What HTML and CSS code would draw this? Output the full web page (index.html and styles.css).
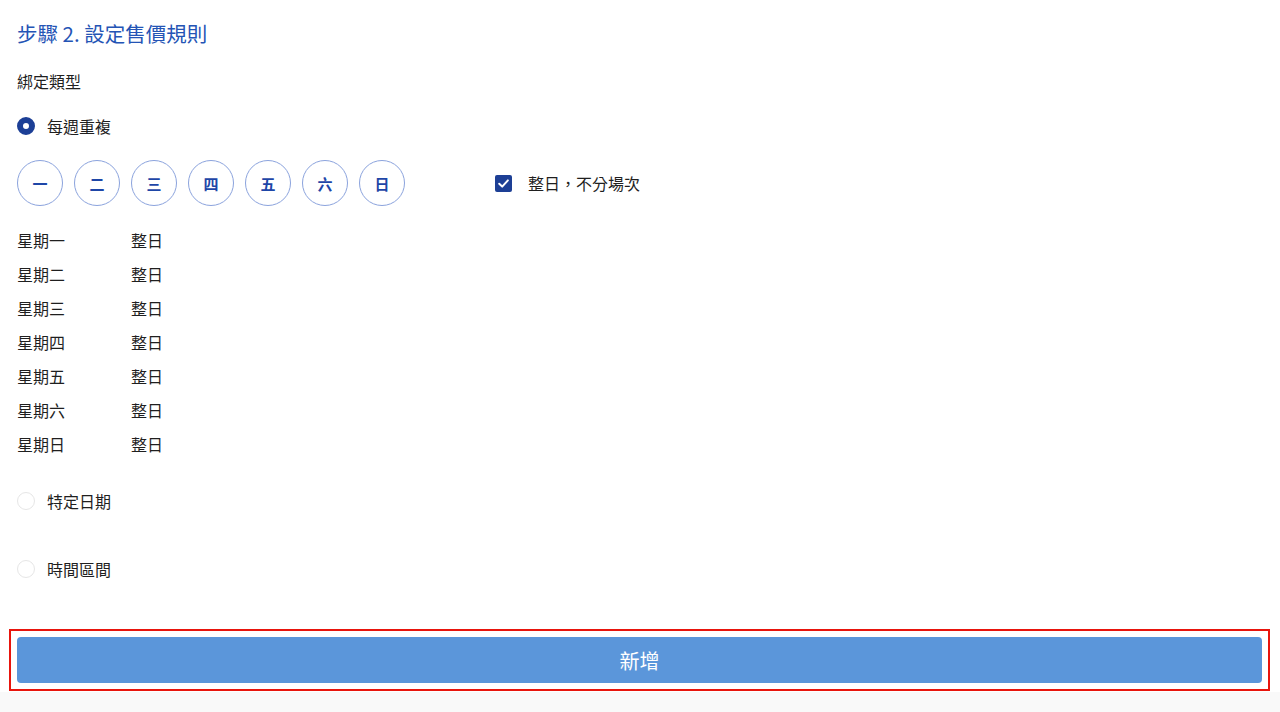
FILE: index.html
```html
<!DOCTYPE html>
<html lang="zh-Hant">

<head>
    <meta charset="UTF-8">
    <meta name="viewport" content="width=device-width, initial-scale=1.0">
    <title>設定售價規則</title>
    <link rel="stylesheet" href="styles.css">
</head>

<body>

    <div class="page">
        <h2 class="step-title">步驟 2. 設定售價規則</h2>

        <div class="field-label">綁定類型</div>

        <label class="radio-row first">
            <span class="radio checked"></span>
            <span>每週重複</span>
        </label>

        <div class="week-row">
            <div class="days">
                <button class="day">一</button>
                <button class="day">二</button>
                <button class="day">三</button>
                <button class="day">四</button>
                <button class="day">五</button>
                <button class="day">六</button>
                <button class="day">日</button>
            </div>
            <label class="check-row">
                <span class="checkbox">
                    <svg width="13" height="13" viewBox="0 0 13 13">
                        <path d="M2.2 6.8 L5.2 9.6 L10.9 3.4" fill="none" stroke="#fff" stroke-width="2" stroke-linecap="round" stroke-linejoin="round" />
                    </svg>
                </span>
                <span>整日，不分場次</span>
            </label>
        </div>

        <div class="schedule">
            <div>星期一</div><div>整日</div>
            <div>星期二</div><div>整日</div>
            <div>星期三</div><div>整日</div>
            <div>星期四</div><div>整日</div>
            <div>星期五</div><div>整日</div>
            <div>星期六</div><div>整日</div>
            <div>星期日</div><div>整日</div>
        </div>

        <label class="radio-row specific">
            <span class="radio"></span>
            <span>特定日期</span>
        </label>

        <label class="radio-row range">
            <span class="radio"></span>
            <span>時間區間</span>
        </label>

        <div class="actions">
            <div class="highlight">
                <button class="add-button">新增</button>
            </div>
        </div>
    </div>

</body>

</html>
```

FILE: styles.css
```css
html,
body {
    margin: 0;
    background-color: #f9f9f9;
    font-family: "Noto Sans CJK TC", "Noto Sans", sans-serif;
    color: #1f1f1f;
}

.page {
    background-color: #fff;
    padding: 19px 0 1px 0;
}

.step-title {
    margin: 0 17px;
    font-size: 20.5px;
    font-weight: 400;
    line-height: 28px;
    color: #2454b5;
}

.field-label {
    margin: 22px 17px 0;
    font-size: 16px;
    line-height: 24px;
}

.radio-row {
    display: flex;
    align-items: center;
    gap: 12px;
    margin: 0 17px;
    font-size: 16px;
    line-height: 24px;
}

.radio-row.first {
    margin-top: 21px;
}

.radio-row.specific {
    margin-top: 28px;
}

.radio-row.range {
    margin-top: 44px;
}

.radio {
    box-sizing: border-box;
    width: 18px;
    height: 18px;
    border-radius: 50%;
    border: 1px solid #e6e6e6;
    background: #fff;
}

.radio.checked {
    border: 6px solid #1c3f96;
}

.week-row {
    display: flex;
    align-items: center;
    margin: 22px 17px 0;
}

.days {
    display: flex;
    gap: 11px;
}

.day {
    box-sizing: border-box;
    width: 46px;
    height: 46px;
    padding: 0;
    border-radius: 50%;
    border: 1px solid #8ba3dd;
    background: #fff;
    color: #1e46a7;
    font-family: "Noto Sans CJK TC", sans-serif;
    font-size: 15px;
    font-weight: 700;
    cursor: pointer;
}

.check-row {
    display: flex;
    align-items: center;
    gap: 16px;
    margin-left: 90px;
    font-size: 16px;
}

.checkbox {
    display: flex;
    align-items: center;
    justify-content: center;
    width: 17px;
    height: 17px;
    border-radius: 2px;
    background-color: #1d3f95;
}

.schedule {
    display: grid;
    grid-template-columns: 114px auto;
    margin: 17px 17px 0;
    font-size: 16px;
    line-height: 34px;
}

.actions {
    margin-top: 48px;
}

.highlight {
    margin: 0 10px 0 9px;
    padding: 6px;
    border: 2px solid #e8150d;
}

.add-button {
    display: block;
    width: 100%;
    height: 46px;
    border: 0;
    border-radius: 4px;
    background-color: #5b96da;
    color: #fff;
    font-family: "Noto Sans CJK TC", sans-serif;
    font-size: 20px;
    cursor: pointer;
}
```
